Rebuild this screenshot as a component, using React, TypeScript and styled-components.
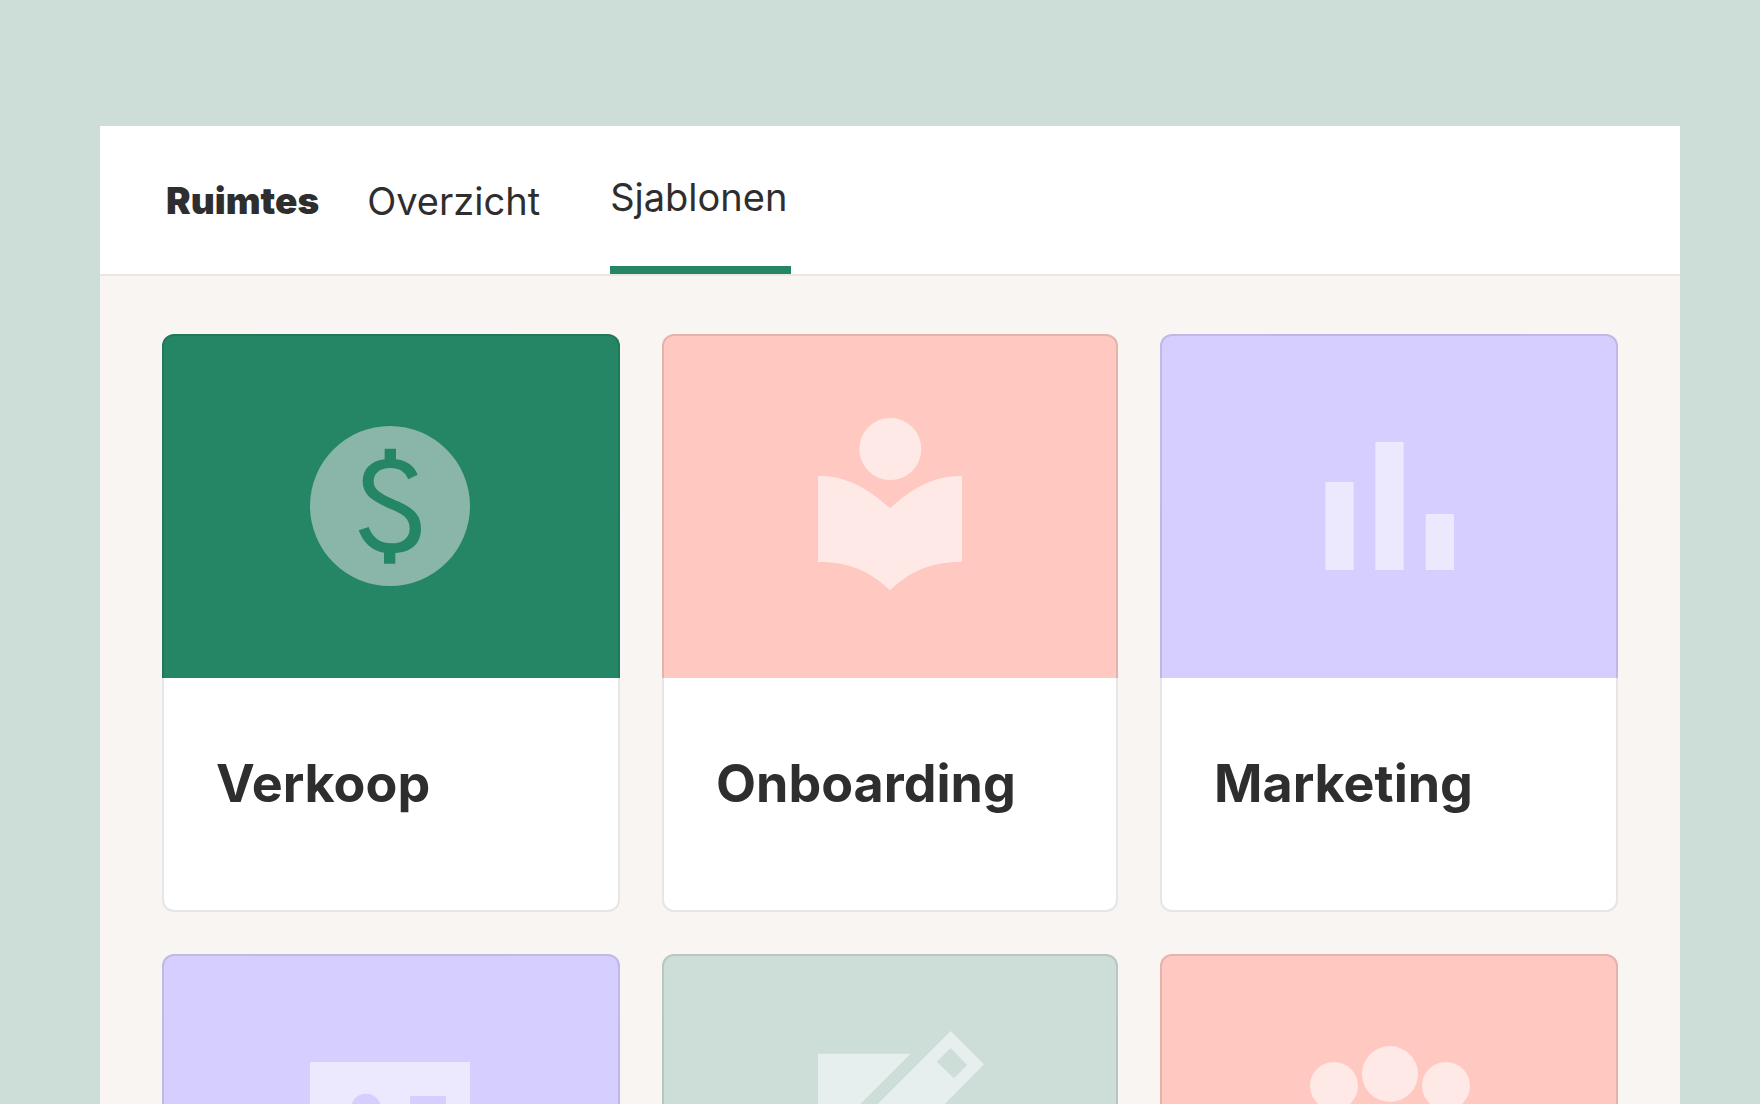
import React from "react";
import styled, { createGlobalStyle } from "styled-components";

const GlobalStyle = createGlobalStyle`
  *, *::before, *::after { box-sizing: border-box; }
  body { margin: 0; background: #cdded8; }
`;

const Page = styled.div`
  height: 100vh;
  overflow: hidden;
  padding: 126px 80px 0 100px;
  background: #cdded8;
  color: #2e2e2e;
  font-family: Inter, "Liberation Sans", sans-serif;
`;

const Panel = styled.main`
  min-height: 100%;
  background: #f9f5f2;
`;

const Header = styled.header`
  display: flex;
  height: 150px;
  padding: 0 66px;
  background: #ffffff;
  border-bottom: 2px solid #ebe7e4;
`;

const Heading = styled.h1`
  display: flex;
  align-items: center;
  margin: 0;
  padding-top: 2px;
  font-size: 37px;
  line-height: 44px;
  font-weight: 900;
`;

const Tabs = styled.nav`
  display: flex;
  gap: 70px;
  margin-left: 48px;
`;

const Tab = styled.a<{ $active?: boolean }>`
  display: flex;
  align-items: center;
  padding-top: 2px;
  padding-right: ${(p) => (p.$active ? "4px" : "0")};
  border-bottom: ${(p) => (p.$active ? "8px solid #258666" : "0")};
  color: inherit;
  font-size: 38px;
  line-height: 44px;
  font-weight: 400;
  text-decoration: none;
`;

const Grid = styled.section`
  display: grid;
  grid-template-columns: 229fr 228fr 229fr;
  gap: 42px;
  padding: 58px 62px;
`;

const Card = styled.article`
  display: flex;
  flex-direction: column;
`;

const Cover = styled.div<{ $color: string }>`
  display: flex;
  align-items: center;
  justify-content: center;
  height: 344px;
  background: ${(p) => p.$color};
  border: 2px solid rgba(0, 0, 0, 0.1);
  border-bottom: 0;
  border-radius: 12px 12px 0 0;
`;

const CardBody = styled.div`
  height: 234px;
  padding: 76px 52px;
  background: #ffffff;
  border: 2px solid #e6e6e6;
  border-top: 0;
  border-radius: 0 0 12px 12px;
`;

const CardTitle = styled.h2`
  margin: 0;
  font-size: 52px;
  line-height: 60px;
  font-weight: 700;
`;

const Icon = styled.svg`
  display: block;
  width: 200px;
  height: 200px;
`;

const DollarIcon = () => (
  <Icon viewBox="3 21 600 600" aria-hidden="true">
    <circle cx="300" cy="318" r="240" fill="#8ab6aa" />
    <path
      fill="#258666"
      d="M284 146H318V178C348 181 374 198 383 224L355 238C345 215 328 204 301 204C270 204 251 220 251 244C251 268 270 281 314 300C365 321 393 340 393 386C393 430 365 456 316 459V491H282V458C248 453 220 430 206 391L236 381C248 413 270 430 304 430C338 430 359 413 359 386C359 354 340 343 293 323C245 302 218 283 218 244C218 208 243 182 284 178Z"
    />
  </Icon>
);

const ReaderIcon = () => (
  <Icon viewBox="0 21 600 600" fill="#ffe9e6" aria-hidden="true">
    <circle cx="301" cy="147" r="93" />
    <path d="M84 228C160 226 230 260 300 325C370 260 440 226 516 228V486C430 484 360 512 300 571C240 512 170 484 84 486Z" />
  </Icon>
);

const ChartIcon = () => (
  <Icon viewBox="-3 21 600 600" fill="#ece8fe" aria-hidden="true">
    <path d="M106 246H191V510H106ZM256 126H341V510H256ZM407 342H492V510H407Z" />
  </Icon>
);

const ContactIcon = () => (
  <Icon viewBox="3 69 600 600" aria-hidden="true">
    <rect x="60" y="174" width="480" height="390" fill="#ece8fe" />
    <g fill="#d6ceff">
      <circle cx="228" cy="314" r="45" />
      <path d="M360 276H468V312H360ZM138 456C138 390 318 390 318 456Z" />
    </g>
  </Icon>
);

const PencilIcon = () => (
  <Icon viewBox="0 69 600 600" overflow="visible" aria-hidden="true">
    <path
      fill="#e6efed"
      fillRule="evenodd"
      d="M84 149H362L180 331V450H395L516 329V582H84ZM482 81L582 181L366 400H230V333ZM482 132L440 173L492 223L531 183Z"
    />
  </Icon>
);

const TeamIcon = () => (
  <Icon viewBox="-3 69 600 600" fill="#ffe9e6" aria-hidden="true">
    <circle cx="132" cy="246" r="72" />
    <circle cx="300" cy="210" r="84" />
    <circle cx="468" cy="246" r="72" />
    <path d="M132 520C132 280 468 280 468 520Z" />
  </Icon>
);

type Template = { color: string; icon: React.ReactNode; title?: string };

const templates: Template[] = [
  { title: "Verkoop", color: "#258666", icon: <DollarIcon /> },
  { title: "Onboarding", color: "#ffc8c0", icon: <ReaderIcon /> },
  { title: "Marketing", color: "#d6ceff", icon: <ChartIcon /> },
  { color: "#d6ceff", icon: <ContactIcon /> },
  { color: "#cdded8", icon: <PencilIcon /> },
  { color: "#ffc8c0", icon: <TeamIcon /> },
];

export default function App() {
  return (
    <>
      <GlobalStyle />
      <Page>
        <Panel>
          <Header>
            <Heading>Ruimtes</Heading>
            <Tabs>
              <Tab href="#overzicht">Overzicht</Tab>
              <Tab href="#sjablonen" $active aria-current="page">
                Sjablonen
              </Tab>
            </Tabs>
          </Header>
          <Grid>
            {templates.map((t, i) => (
              <Card key={i}>
                <Cover $color={t.color}>{t.icon}</Cover>
                {t.title && (
                  <CardBody>
                    <CardTitle>{t.title}</CardTitle>
                  </CardBody>
                )}
              </Card>
            ))}
          </Grid>
        </Panel>
      </Page>
    </>
  );
}
